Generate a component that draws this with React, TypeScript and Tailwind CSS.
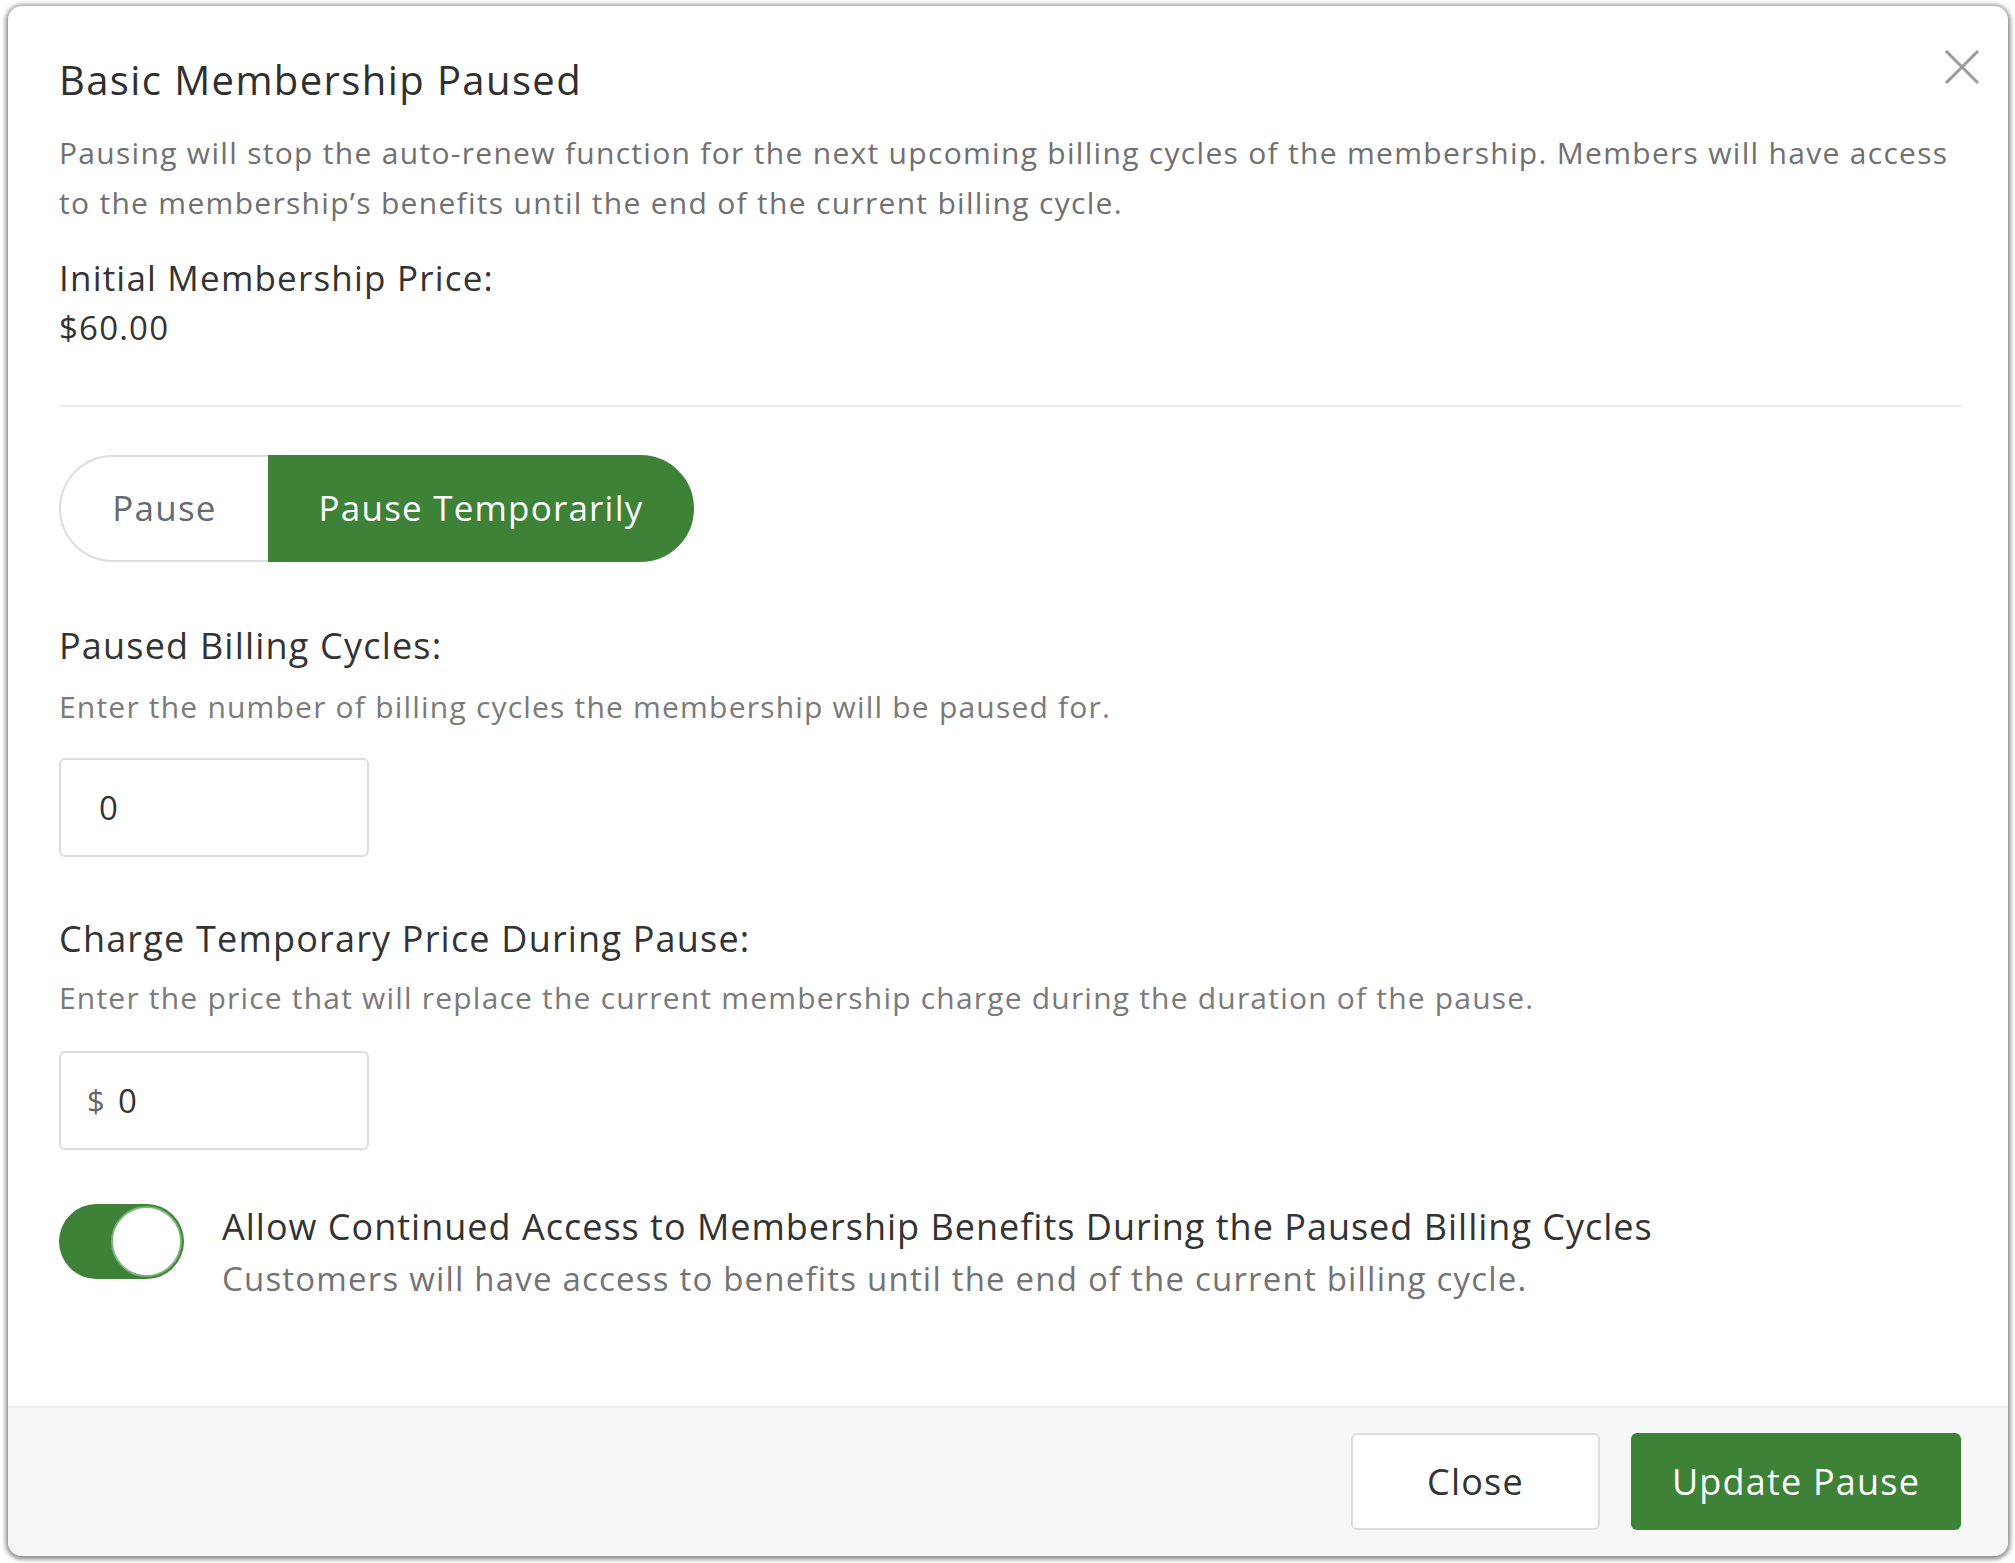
import { useState } from 'react';

export default function App() {
    const [mode, setMode] = useState<'pause' | 'temp'>('temp');
    const [cycles, setCycles] = useState('0');
    const [price, setPrice] = useState('0');
    const [allowAccess, setAllowAccess] = useState(true);

    return (
        <div className="w-[2015px] h-[1563px] bg-white pt-[6px] pl-[8px] font-['Open_Sans',sans-serif] tracking-[1.2px]">
            <div className="relative w-[2000px] h-[1550px] bg-white rounded-[14px] shadow-[0_1px_5px_2px_rgba(0,0,0,0.5)] flex flex-col overflow-hidden">
                <button className="absolute top-[43px] right-[28px] w-[36px] h-[36px] flex items-center justify-center text-[#9a9a9a]">
                    <svg viewBox="0 0 36 36" className="w-[36px] h-[36px]" fill="none" stroke="currentColor" strokeWidth="3">
                        <path d="M2 2 L34 34 M34 2 L2 34" />
                    </svg>
                </button>

                <div className="flex-1 pt-[50px] pl-[51px] pr-[46px]">
                    <h2 className="text-[40px] leading-[48px] text-[#2f2f2f] tracking-[1.4px]">Basic Membership Paused</h2>
                    <p className="mt-[24px] text-[30px] leading-[50px] text-[#707070] tracking-[1.3px]">
                        Pausing will stop the auto-renew function for the next upcoming billing cycles of the membership. Members will have access to the membership’s benefits until the end of the current billing cycle.
                    </p>
                    <div className="mt-[27px] text-[35px] leading-[46px] text-[#333]">Initial Membership Price:</div>
                    <div className="mt-[7px] text-[33px] leading-[40px] text-[#333]">$60.00</div>

                    <div className="mt-[57px] border-t-2 border-[#eeeeee]" />

                    <div className="mt-[48px] flex h-[107px] w-[635px]">
                        <button
                            onClick={() => setMode('pause')}
                            className={`w-[209px] rounded-l-full border-2 border-r-0 text-[35px] ${mode === 'pause' ? 'bg-[#3d8237] border-[#3d8237] text-white' : 'bg-white border-[#dddddd] text-[#666b70]'}`}
                        >
                            Pause
                        </button>
                        <button
                            onClick={() => setMode('temp')}
                            className={`flex-1 rounded-r-full border-2 text-[35px] ${mode === 'temp' ? 'bg-[#3d8237] border-[#3d8237] text-white' : 'bg-white border-[#dddddd] text-[#666b70]'}`}
                        >
                            Pause Temporarily
                        </button>
                    </div>

                    <div className="mt-[61px] text-[36px] leading-[46px] text-[#333]">Paused Billing Cycles:</div>
                    <div className="mt-[18px] text-[30px] leading-[40px] text-[#7a7a7a]">Enter the number of billing cycles the membership will be paused for.</div>
                    <input
                        value={cycles}
                        onChange={(e) => setCycles(e.target.value)}
                        className="mt-[31px] block w-[310px] h-[99px] rounded-[6px] border-2 border-[#dcdcdc] pl-[38px] text-[33px] text-[#333] outline-none"
                    />

                    <div className="mt-[59px] text-[36px] leading-[46px] text-[#333]">Charge Temporary Price During Pause:</div>
                    <div className="mt-[16px] text-[30px] leading-[40px] text-[#7a7a7a]">Enter the price that will replace the current membership charge during the duration of the pause.</div>
                    <div className="mt-[33px] flex items-center w-[310px] h-[99px] rounded-[6px] border-2 border-[#dcdcdc] pl-[26px]">
                        <span className="text-[31px] text-[#666] mr-[12px]">$</span>
                        <input
                            value={price}
                            onChange={(e) => setPrice(e.target.value)}
                            className="w-full text-[33px] text-[#333] outline-none"
                        />
                    </div>

                    <div className="mt-[54px] flex items-start gap-[38px]">
                        <button
                            onClick={() => setAllowAccess(!allowAccess)}
                            className={`relative w-[125px] h-[75px] rounded-full shrink-0 ${allowAccess ? 'bg-[#3d8237]' : 'bg-[#cccccc]'}`}
                        >
                            <span
                                className={`absolute top-[2px] w-[71px] h-[71px] rounded-full bg-white border-2 border-[#7fb27a] ${allowAccess ? 'right-[2px]' : 'left-[2px]'}`}
                            />
                        </button>
                        <div>
                            <div className="text-[36px] leading-[46px] text-[#333] tracking-[1px]">Allow Continued Access to Membership Benefits During the Paused Billing Cycles</div>
                            <div className="mt-[7px] text-[33px] leading-[44px] text-[#737373]">Customers will have access to benefits until the end of the current billing cycle.</div>
                        </div>
                    </div>
                </div>

                <div className="h-[150px] shrink-0 border-t-2 border-[#ededed] bg-[#f7f7f7] flex justify-end items-start pt-[25px] pr-[47px] gap-[31px]">
                    <button className="w-[249px] h-[97px] rounded-[6px] border-2 border-[#dddddd] bg-white text-[36px] text-[#333]">Close</button>
                    <button className="w-[330px] h-[97px] rounded-[6px] bg-[#3d8237] text-[36px] text-white">Update Pause</button>
                </div>
            </div>
        </div>
    );
}
